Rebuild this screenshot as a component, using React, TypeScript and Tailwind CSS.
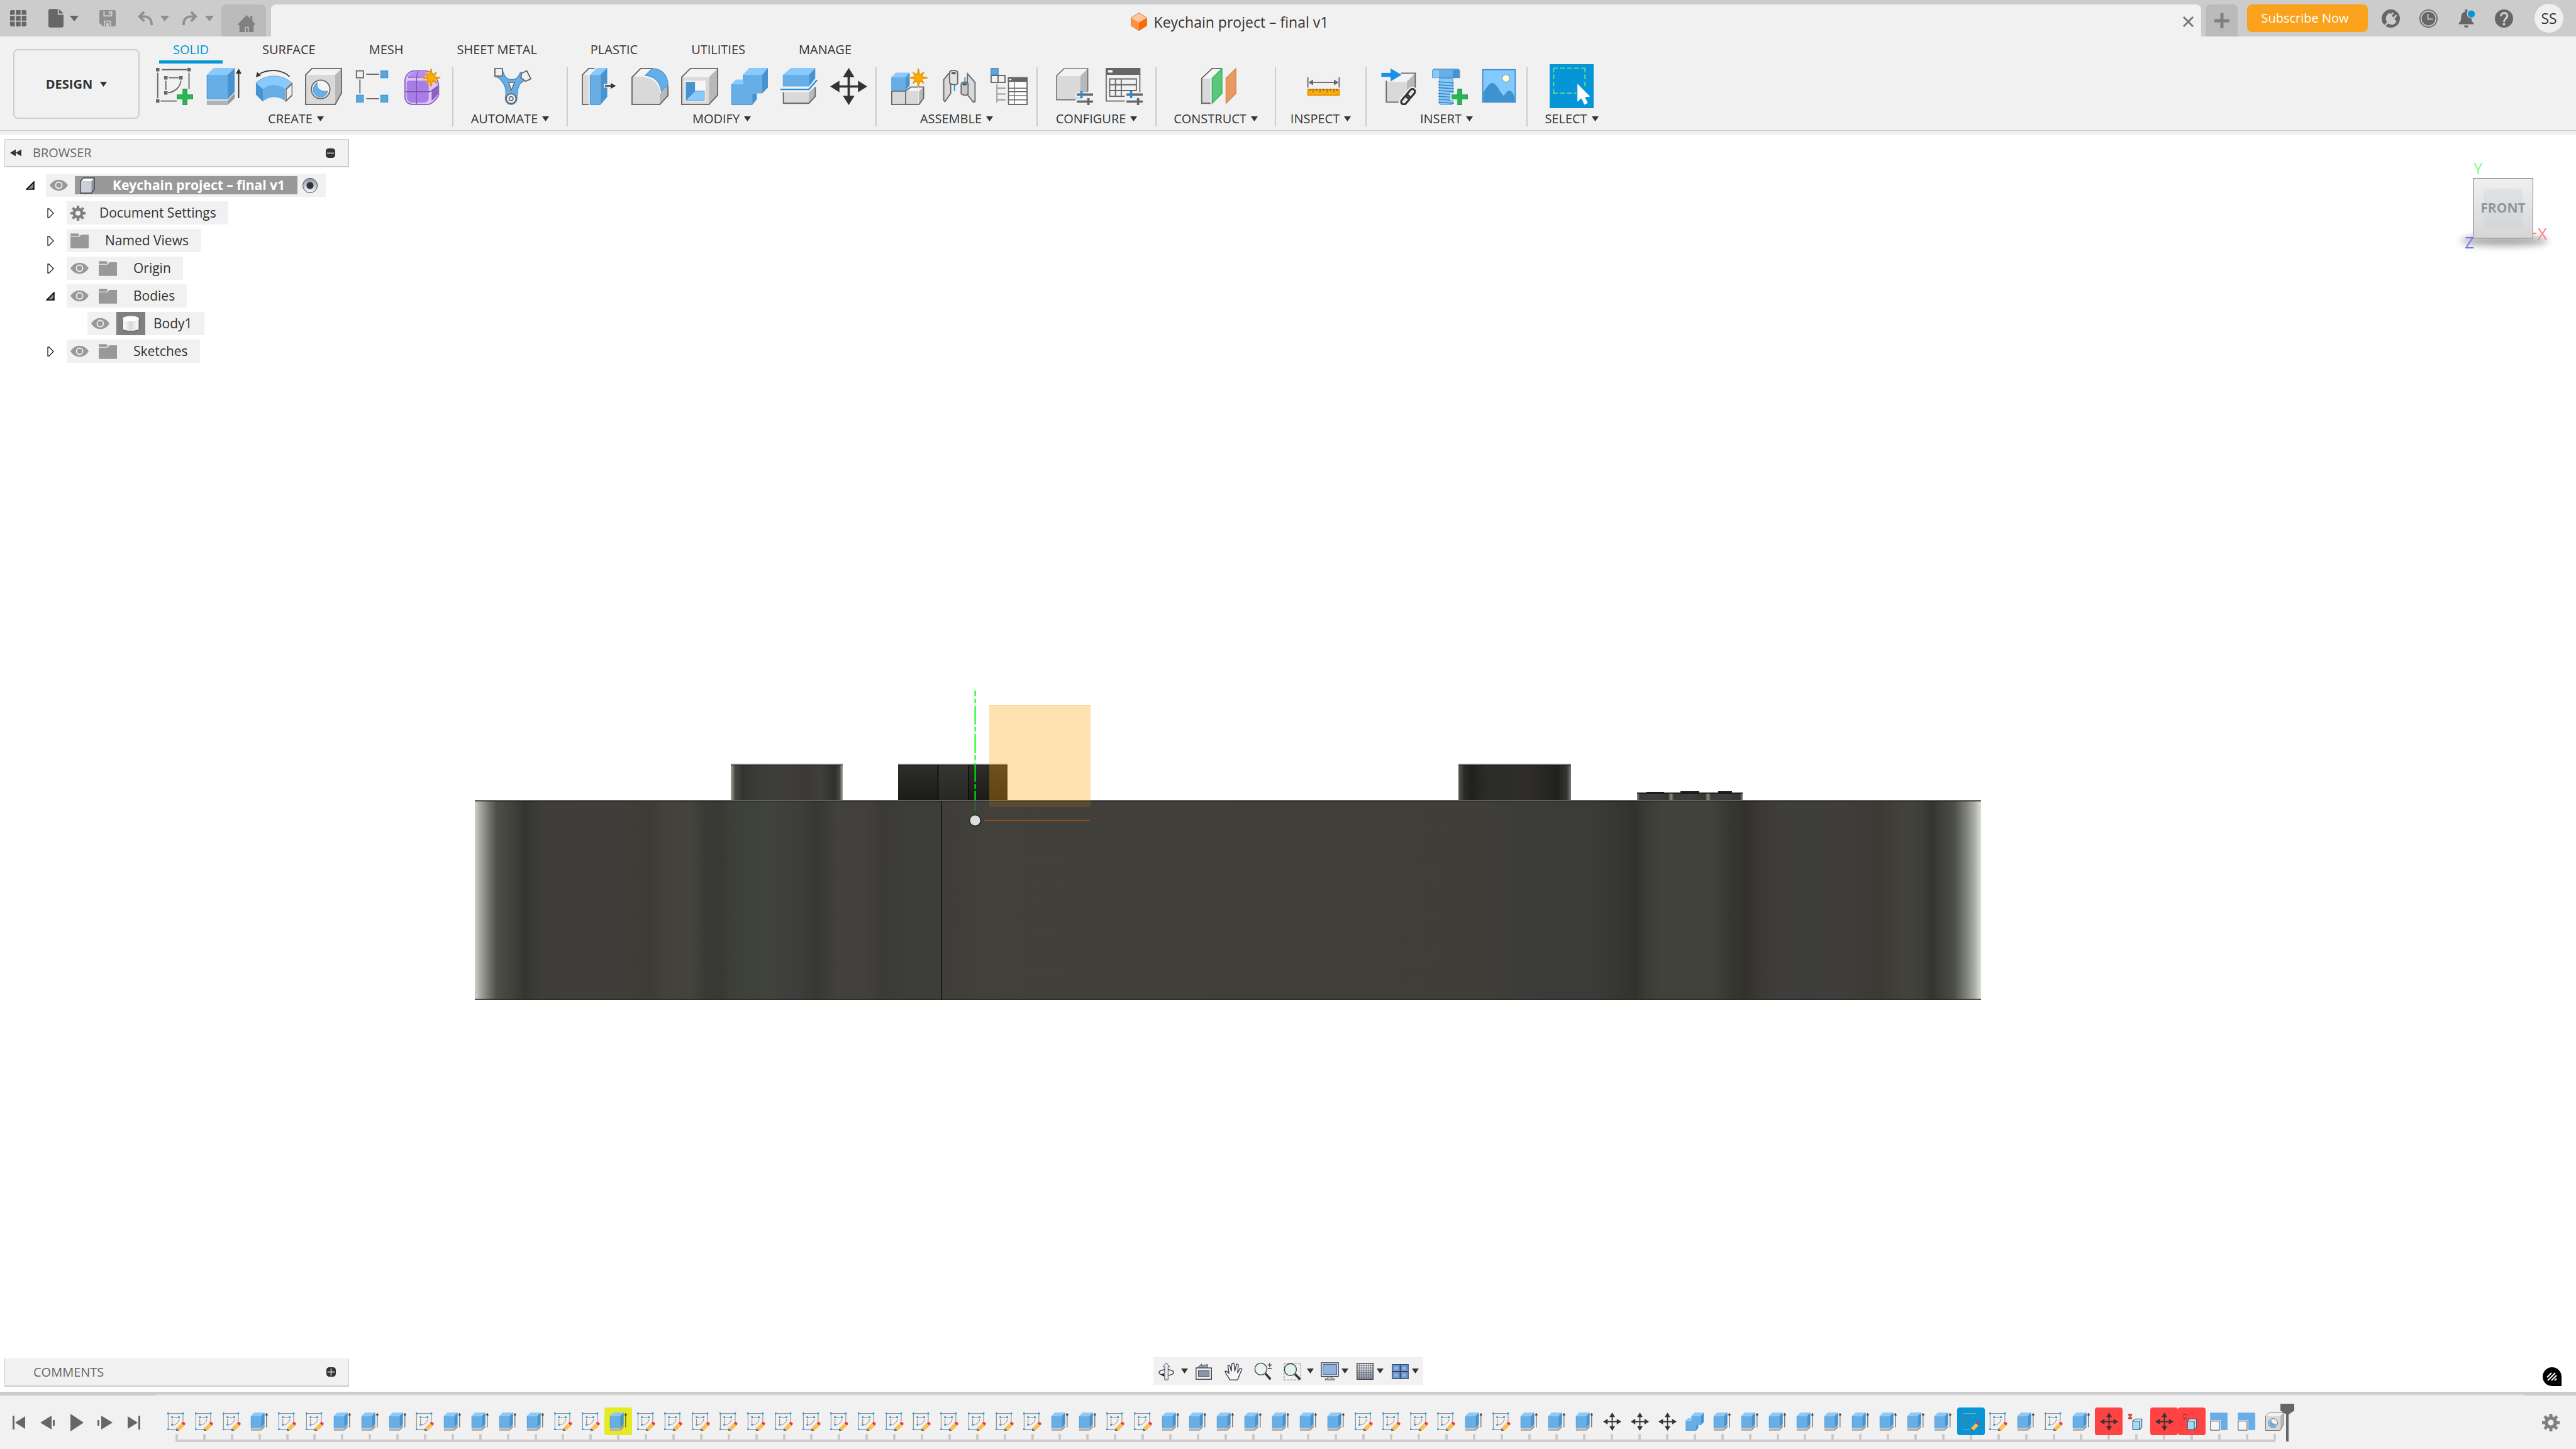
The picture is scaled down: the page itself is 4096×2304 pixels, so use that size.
import type { ReactNode } from "react";

type IconProps = { className?: string };

const BLUE = "#68aee6";
const BLUE_TOP = "#89cafd";
const BLUE_SIDE = "#4693cf";
const EDGE = "#666666";

function starPoints(cx: number, cy: number, outer: number, inner: number, spikes = 8) {
  return Array.from({ length: spikes * 2 }, (_, i) => {
    const r = i % 2 === 0 ? (i % 4 === 0 ? outer : outer * 0.8) : inner;
    const a = (Math.PI * i) / spikes - Math.PI / 2;
    return `${(cx + r * Math.cos(a)).toFixed(2)},${(cy + r * Math.sin(a)).toFixed(2)}`;
  }).join(" ");
}

function Icon({ className = "h-[59px] w-[59px]", box = "0 0 64 64", children }: IconProps & { box?: string; children: ReactNode }) {
  return (
    <svg viewBox={box} className={`shrink-0 ${className}`} fill="none" aria-hidden="true">
      {children}
    </svg>
  );
}

function Caret({ className = "h-2 w-[11px] text-[#333]" }: IconProps) {
  return (
    <svg viewBox="0 0 10 8" preserveAspectRatio="none" className={`shrink-0 ${className}`} aria-hidden="true">
      <path d="M0 0h10L5 8z" fill="currentColor" />
    </svg>
  );
}

function Star({ cx = 46, cy = 17 }: { cx?: number; cy?: number }) {
  return (
    <>
      <polygon points={starPoints(cx, cy, 18, 8)} fill="#f1f1f1" />
      <polygon points={starPoints(cx, cy, 16, 6)} fill="#ffab00" stroke="#e09300" strokeWidth="1.5" />
    </>
  );
}

/* ---------- create ---------- */

function SketchIcon() {
  return (
    <Icon>
      <g stroke={EDGE} strokeWidth="2">
        <path d="M10 3h43M3 8v44M57 8v28M8 57h28M22 17h17M17 22v16M43 22c-1 10-9 19-22 21" />
      </g>
      <path d="M0 0h6v6H0zM54 0h6v6h-6zM0 54h6v6H0zM14 14h6v6h-6zM40 14h6v6h-6zM14 40h6v6h-6z" fill={EDGE} />
      <path d="M46.5 36.5h7v10h10v7h-10v10h-7v-10h-10v-7h10z" fill="#2bb656" stroke="#1e9e47" strokeWidth="1.2" />
    </Icon>
  );
}

function ExtrudeShape() {
  return (
    <>
      <path d="M2 56h36v8H2z" fill="#b3b3b3" />
      <path d="M38 56l12-13v9L38 64z" fill="#999" />
      <path d="M2 12h36v42H2z" fill={BLUE} />
      <path d="M2 12L14 0h36L38 12z" fill={BLUE_TOP} />
      <path d="M38 12L50 0v41L38 54z" fill={BLUE_SIDE} />
      <path d="M2.5 12v41.5H38L49.5 41" stroke="#3e8ecb" strokeWidth="1" />
      <path d="M57 52V8" stroke="#333" strokeWidth="2" />
      <path d="M57 1l5 9H52z" fill="#333" />
    </>
  );
}

function ExtrudeIcon() {
  return (
    <Icon>
      <ExtrudeShape />
    </Icon>
  );
}

function RevolveIcon() {
  return (
    <Icon>
      <path d="M1 26C18 10 46 10 63 26L51 37c-11-9-27-9-38 0z" fill={BLUE_TOP} stroke="#5ba0d6" />
      <path d="M13 37c11-9 27-9 38 0v20c-11-9-27-9-38 1z" fill={BLUE} />
      <path d="M1 26l12 11v21L1 46z" fill={BLUE_SIDE} />
      <path d="M53 37l10.5-10v20L53 57z" fill="#f1f1f1" stroke={EDGE} strokeWidth="2" />
      <path d="M59 15C46 2 20 1 5 12" stroke="#333" strokeWidth="2" />
      <path d="M1 16l2-9 7 6z" fill="#333" />
    </Icon>
  );
}

function HoleShape() {
  return (
    <>
      <path d="M1 12L12 1h51L52 12z" fill="#f3f3f3" />
      <path d="M52 12L63 1v42L52 63z" fill="#b8b8b8" />
      <path d="M1 12h51v51H1z" fill="#d9d9d9" />
      <path d="M1 12L12 1h51v42L52 63H1z" stroke={EDGE} strokeWidth="2" />
      <circle cx="27" cy="37" r="16" fill="#f3f3f3" stroke={EDGE} strokeWidth="2" />
      <path d="M21 25c-9 7-9 19 0 24 7 4 16 0 18-9-11 2-20-4-18-15z" fill={BLUE} stroke="#4b96d2" />
    </>
  );
}

function HoleIcon() {
  return (
    <Icon>
      <HoleShape />
    </Icon>
  );
}

function PatternIcon() {
  return (
    <Icon>
      <path d="M20 11h22M20 53h22M9 20v24" stroke={EDGE} strokeWidth="2" />
      <rect x="3" y="5" width="12" height="12" stroke={EDGE} strokeWidth="2" />
      <g fill="#5aa6dd" stroke="#4b96d2" strokeWidth="1.5">
        <rect x="45" y="5" width="12" height="12" />
        <rect x="3" y="47" width="12" height="12" />
        <rect x="45" y="47" width="12" height="12" />
      </g>
    </Icon>
  );
}

function FormIcon() {
  return (
    <Icon>
      <path d="M1 22C1 14 8 5 18 5h18c12 0 23 16 23 26v14c0 6-12 18-18 18H14C7 63 1 58 1 50z" fill="#dcc6f7" stroke="#8b62bd" strokeWidth="2" />
      <path d="M10 10c4-3 8-4 12-4h12l6 10H5c1-2 3-4 5-6z" fill="#b78cf5" />
      <path d="M4 26c0-3 2-4 5-4h26c5 0 7 2 7 7v22c0 6-4 9-9 9H14C8 60 4 56 4 50z" fill="#a97de6" />
      <path d="M47 38l11-8v14c-1 4-8 11-11 12z" fill="#8e60c6" />
      <path d="M21 20v43M2 41h42l14-9M24 5c-2 5-3 10-3 15M6 16h34" stroke="#7d55ae" strokeWidth="1.5" />
      <Star />
    </Icon>
  );
}

/* ---------- automate ---------- */

function AutomateIcon() {
  return (
    <Icon>
      <path
        d="M14 3c3 14 9 17 17 17 8 0 10-4 14-12l14 13c-10 1-14 4-17 11-3 7-3 14-3 22a9.5 9.5 0 1 1-20-2c3-14 0-22-6-29-4-5-7-8-12-8z"
        fill={BLUE}
        stroke="#4388c2"
        strokeWidth="1.5"
      />
      <path d="M25 25h10l-6 14z" fill="#f1f1f1" stroke={EDGE} strokeWidth="1.5" />
      <path d="M1 1h13v13H1z" fill="#f1f1f1" stroke={EDGE} strokeWidth="2" />
      <path d="M56 5l7 14-9 4-8-6 1-8z" fill="#f1f1f1" stroke={EDGE} strokeWidth="2" />
      <circle cx="29" cy="53" r="8.5" fill="#f1f1f1" stroke={EDGE} strokeWidth="2" />
      <circle cx="29" cy="53" r="3.5" stroke={EDGE} strokeWidth="2" />
    </Icon>
  );
}

/* ---------- modify ---------- */

function PressPullIcon() {
  return (
    <Icon>
      <path d="M1 12h11v51H1z" fill="#d9d9d9" />
      <path d="M12 63H1V12L12 1h10" stroke={EDGE} strokeWidth="2" />
      <path d="M14 12h18v52H14z" fill={BLUE} />
      <path d="M14 12L26 0h18L32 12z" fill={BLUE_TOP} />
      <path d="M32 12L44 0v50L32 64z" fill={BLUE_SIDE} />
      <path d="M14.5 12v51.5H32" stroke="#4b96d2" />
      <path d="M38 28h11v-5l11 8-11 8v-5H38z" fill="#f1f1f1" />
      <path d="M40 31h12" stroke="#333" strokeWidth="2.5" />
      <path d="M50 26l9 5-9 5z" fill="#333" />
    </Icon>
  );
}

function FilletIcon() {
  return (
    <Icon>
      <path d="M1 15L16 1h20L22 15z" fill="#f3f3f3" />
      <path d="M1 15h21c16 0 27 12 27 28v20H1z" fill="#d9d9d9" />
      <path d="M49 45l14-15v18L49 63z" fill="#b8b8b8" />
      <path d="M36 1H16L1 16v47h48l14-15V31" stroke={EDGE} strokeWidth="2" />
      <path d="M24 13L36 1c16 0 27 12 27 28L51 41C50 24 40 14 24 13z" fill={BLUE} stroke="#4b96d2" strokeWidth="1.5" />
      <path d="M22 15.5c16 0 27.5 12 28 27" stroke="#f4f4f4" strokeWidth="2" />
    </Icon>
  );
}

function ShellIcon() {
  return (
    <Icon>
      <path d="M1 16L16 1h47L48 16z" fill="#f3f3f3" />
      <path d="M48 16L63 1v46L48 63z" fill="#b8b8b8" />
      <path d="M1 16h47v47H1z" fill="#d9d9d9" />
      <path d="M1 16L16 1h47v46L48 63H1z" stroke={EDGE} strokeWidth="2" />
      <path d="M6 22h36v36H6z" fill="#f6f6f6" />
      <path d="M8 24h16v16L8 56z" fill={BLUE_SIDE} />
      <path d="M24 40h16v16H8z" fill={BLUE_TOP} stroke="#4b96d2" />
    </Icon>
  );
}

function CombineShape() {
  return (
    <>
      <path d="M1 28h20V12h33v32H37v20H1z" fill={BLUE} />
      <path d="M21 12L32 0h32L54 12zM1 28l8-8h12v8z" fill={BLUE_TOP} />
      <path d="M54 12L64 0v34L54 44zM37 44h8v10l-8 10z" fill={BLUE_SIDE} />
      <path d="M1.5 28v35.5H37M21.5 12v8" stroke="#4b96d2" />
    </>
  );
}

function CombineIcon() {
  return (
    <Icon>
      <CombineShape />
    </Icon>
  );
}

function SplitIcon() {
  return (
    <Icon>
      <path d="M4 12h45v20H4z" fill={BLUE} />
      <path d="M4 12L18 0h42L49 12z" fill={BLUE_TOP} />
      <path d="M49 12L60 0v18L49 32z" fill={BLUE_SIDE} />
      <path d="M0 37h49l14-16" stroke="#1a8fe6" strokeWidth="2.5" />
      <path d="M5 42h44v19H5z" fill="#d9d9d9" />
      <path d="M49 42l11-10v17L49 61z" fill="#b8b8b8" />
      <path d="M5 42v19h44l11-12V33" stroke={EDGE} strokeWidth="2" />
    </Icon>
  );
}

function MoveShape() {
  return (
    <>
      <path d="M32 12v40M12 32h40" stroke="#333" strokeWidth="4" />
      <path d="M32 0l10 16H22zM32 64l10-16H22zM0 32l16-10v20zM64 32L48 22v20z" fill="#333" />
    </>
  );
}

function MoveIcon() {
  return (
    <Icon>
      <MoveShape />
    </Icon>
  );
}

/* ---------- assemble ---------- */

function NewComponentIcon() {
  return (
    <Icon>
      <path d="M1 40h46v23H1z" fill="#d9d9d9" />
      <path d="M25 40l9-7h22l-8 7z" fill="#f3f3f3" />
      <path d="M48 40l8-7v19l-8 11z" fill="#b8b8b8" />
      <path d="M1 40v23h47l8-11V33H34l-9 7v23M1 40h24" stroke={EDGE} strokeWidth="2" />
      <path d="M0 16h25v23H0z" fill={BLUE} />
      <path d="M0 16l8-8h24l-7 8z" fill={BLUE_TOP} />
      <path d="M25 16l7-8v22l-7 9z" fill={BLUE_SIDE} />
      <Star cx={47} />
    </Icon>
  );
}

function JointIcon() {
  return (
    <Icon>
      <path d="M5 20L17 6v38L7 58l-2-2z" fill="#d9d9d9" stroke={EDGE} strokeWidth="2" />
      <path d="M15 8c1-5 13-5 14 0v18c0 4-10 4-14 0z" fill="#e3e3e3" stroke={EDGE} strokeWidth="2" />
      <ellipse cx="22" cy="9" rx="4" ry="2" fill="#555" />
      <path d="M23.5 29v11" stroke="#1a8fe6" strokeWidth="2" />
      <path d="M46 10l13 15v33l-3 1-11-14z" fill="#d9d9d9" stroke={EDGE} strokeWidth="2" />
      <path d="M35 28c1-5 11-5 12 0v16c0 4-10 4-12 0z" fill="#c6c6c6" stroke={EDGE} strokeWidth="2" />
      <ellipse cx="41" cy="28" rx="4" ry="2" fill="#555" />
      <path d="M41.5 16v11" stroke="#1a8fe6" strokeWidth="2" />
    </Icon>
  );
}

function BomIcon() {
  return (
    <Icon>
      <rect x="1" y="1" width="12" height="11" fill="#5aa6dd" stroke="#4b96d2" strokeWidth="2" />
      <path d="M1 13h24v12H1zM13 13v12" stroke={EDGE} strokeWidth="2" />
      <path d="M11 28v32M11 35h15M11 45h15M11 55h15" stroke="#999" strokeWidth="2" />
      <rect x="31" y="17" width="32" height="46" fill="#fff" stroke={EDGE} strokeWidth="2" />
      <path d="M30 16h34v8H30z" fill={EDGE} />
      <path d="M32 19h4v2h-4z" fill="#fff" />
      <path d="M41 24v39M31 35h32M31 41h32M31 48h32M31 55h32" stroke={EDGE} strokeWidth="1.5" />
    </Icon>
  );
}

/* ---------- configure ---------- */

function Sliders() {
  return (
    <>
      <path d="M36 46h28M36 58h28" stroke={EDGE} strokeWidth="4" />
      <path d="M44 40v12" stroke="#1a8fe6" strokeWidth="4" />
      <path d="M56 52v12" stroke={EDGE} strokeWidth="4" />
    </>
  );
}

function ConfigureIcon() {
  return (
    <Icon>
      <path d="M1 14L14 1h41L42 14z" fill="#f3f3f3" />
      <path d="M42 14L55 1v40L42 55z" fill="#b8b8b8" />
      <path d="M1 14h41v41H1z" fill="#d9d9d9" />
      <path d="M55 41V1H14L1 14v41h34" stroke={EDGE} strokeWidth="1.5" />
      <path d="M34 42h30v8H34zM34 54h30v8H34z" fill="#f1f1f1" />
      <Sliders />
    </Icon>
  );
}

function ConfigTableIcon() {
  return (
    <Icon>
      <path d="M0 0h60v12H0z" fill={EDGE} />
      <path d="M4 4h8v4H4z" fill="#fff" />
      <path d="M1 10v47h32M59 10v32" stroke={EDGE} strokeWidth="2" />
      <path d="M53 40V19H7v30h26M7 29h46M7 39h46M17 19v30M27 19v30" stroke={EDGE} strokeWidth="2" />
      <path d="M34 42h30v22H34z" fill="#f1f1f1" />
      <Sliders />
    </Icon>
  );
}

/* ---------- construct, inspect ---------- */

function ConstructIcon() {
  return (
    <Icon>
      <path d="M3 18h15v43H3z" fill="#d9d9d9" />
      <path d="M3 18L21 1h16L20 18z" fill="#f5f5f5" />
      <path d="M18 61H3V18L21 1h17" stroke={EDGE} strokeWidth="2" />
      <path d="M21 18L38 1v43L21 61z" fill="#5bc77c" stroke="#35b35c" strokeWidth="1.5" />
      <path d="M45 18L62 1v43L45 61z" fill="#e89a64" stroke="#d98246" strokeWidth="1.5" />
    </Icon>
  );
}

function InspectIcon() {
  return (
    <Icon>
      <path d="M5 16v18M59 16v18M10 25h44" stroke={EDGE} strokeWidth="2" />
      <path d="M6 25l8-5v10zM58 25l-8-5v10z" fill={EDGE} />
      <rect x="5" y="37" width="54" height="10" fill="#ffab00" stroke="#e09300" strokeWidth="2" />
      <path d="M9 36v4M14 36v6M20 36v4M26 36v6M32 36v4M38 36v6M44 36v4M50 36v6M55 36v4" stroke={EDGE} strokeWidth="1.5" />
    </Icon>
  );
}

/* ---------- insert, select ---------- */

function InsertLinkIcon() {
  return (
    <Icon>
      <path d="M9 24L24 9h35L44 24z" fill="#f3f3f3" />
      <path d="M44 24L59 9v38L44 60z" fill="#b8b8b8" />
      <path d="M9 24h35v36H9z" fill="#d9d9d9" />
      <path d="M34 9h25v28M9 22v37h21" stroke={EDGE} strokeWidth="2" />
      <path d="M0 8h16V0l20 12-20 12v-8H0z" fill="#1a8fe6" stroke="#f1f1f1" />
      <g transform="rotate(-50 47 50)">
        <g stroke="#f1f1f1" strokeWidth="8">
          <rect x="31" y="45" width="18" height="9" rx="4.5" />
          <rect x="45" y="45" width="18" height="9" rx="4.5" />
        </g>
        <g stroke="#333" strokeWidth="3.5">
          <rect x="31" y="45" width="18" height="9" rx="4.5" />
          <rect x="45" y="45" width="18" height="9" rx="4.5" />
        </g>
      </g>
    </Icon>
  );
}

function BoltIcon() {
  return (
    <Icon>
      <path d="M15 18h23v44l-3 2H18l-3-2z" fill="#89cafd" stroke="#4b96d2" />
      <path d="M3 4l2-2h42l3 2v13H3z" fill={BLUE} stroke="#4285bd" />
      <path d="M4 4h10v13H4z" fill={BLUE_TOP} />
      <path d="M38 3h11v14H38z" fill={BLUE_SIDE} />
      <path
        d="M13 24l27 2M13 29l27 2M13 34l27 2M13 39l27 2M13 44l27 2M13 49l27 2M13 54l27 2M13 59l27 2"
        stroke="#3f86bf"
        strokeWidth="1.8"
      />
      <path d="M44 34h12v10h8v12h-8v8H44v-8H34V44h10z" fill="#f1f1f1" />
      <path d="M46.5 36.5h7v10h10v7h-10v10h-7v-10h-10v-7h10z" fill="#2bb656" stroke="#1e9e47" strokeWidth="1.2" />
    </Icon>
  );
}

function ImageIcon() {
  return (
    <Icon>
      <rect x="4" y="3" width="56" height="56" fill="#84c9fd" stroke="#3e92cf" strokeWidth="2" />
      <circle cx="44" cy="18" r="6.5" fill="#ffffcf" stroke="#7aa9c0" strokeWidth="1.5" />
      <path d="M5 42c5-7 10-16 15-16 9 0 13 16 20 22 4-3 5-9 9-9 5 0 7 4 10 12v8H5z" fill="#3e92cf" />
    </Icon>
  );
}

function SelectIcon() {
  return (
    <Icon className="h-[70px] w-[70px]" box="0 0 76 76">
      <path d="M7 14V7h7M54 7h7v7M7 43v7h7" stroke="#6cdb84" strokeWidth="2" />
      <path d="M18 7h32M18 50h28M7 18v22M61 18v22" stroke="#6cdb84" strokeWidth="2" strokeDasharray="8 4" />
      <path d="M48 34l22 22-9 1 5 10-6 3-5-11-7 6z" fill="#fff" />
    </Icon>
  );
}

const tabs = ["SOLID", "SURFACE", "MESH", "SHEET METAL", "PLASTIC", "UTILITIES", "MANAGE"];

const groups = [
  { label: "CREATE", width: "w-[499px]", icons: [SketchIcon, ExtrudeIcon, RevolveIcon, HoleIcon, PatternIcon, FormIcon] },
  { label: "AUTOMATE", width: "w-[182px]", icons: [AutomateIcon] },
  { label: "MODIFY", width: "w-[491px]", icons: [PressPullIcon, FilletIcon, ShellIcon, CombineIcon, SplitIcon, MoveIcon] },
  { label: "ASSEMBLE", width: "w-[256px]", icons: [NewComponentIcon, JointIcon, BomIcon] },
  { label: "CONFIGURE", width: "w-[189px]", icons: [ConfigureIcon, ConfigTableIcon] },
  { label: "CONSTRUCT", width: "w-[190px]", icons: [ConstructIcon] },
  { label: "INSPECT", width: "w-[144px]", icons: [InspectIcon] },
  { label: "INSERT", width: "w-[256px]", icons: [InsertLinkIcon, BoltIcon, ImageIcon] },
];

function TitleBar() {
  return (
    <header className="flex h-[58px] items-end bg-[#ccc] text-[#666]">
      <div className="flex h-full items-center pr-3 pl-4">
        <button aria-label="Data panel" className="mr-[35px]">
          <Icon className="h-[26px] w-[26px]" box="0 0 28 28">
            <path
              d="M2 0h6v8H0V2zM10 0h8v8h-8zM20 0h6l2 2v6h-8zM0 10h8v8H0zM10 10h8v8h-8zM20 10h8v8h-8zM0 20h8v8H2l-2-2zM10 20h8v8h-8zM20 20h8v6l-2 2h-6z"
              fill="currentColor"
            />
          </Icon>
        </button>
        <button aria-label="File" className="mr-[33px] flex items-center gap-[10px]">
          <Icon className="h-[30px] w-6" box="0 0 26 32">
            <path d="M2 0h14v10h10v20l-2 2H2l-2-2V2z" fill="currentColor" />
            <path d="M18 0l8 8h-8z" fill="currentColor" />
          </Icon>
          <Caret className="h-[9px] w-[14px]" />
        </button>
        <button aria-label="Save" className="mr-[35px] text-[#8f8f8f]">
          <Icon className="h-[26px] w-[26px]" box="0 0 28 28">
            <path d="M2 0h24l2 2v24l-2 2H6l-6-6V2z" fill="currentColor" />
            <path d="M8 1v9h13V1M9 27v-8h10v8" stroke="#ccc" strokeWidth="2" />
            <path d="M12 22h4v6h-4zM16 2h3v5h-3z" fill="#ccc" />
          </Icon>
        </button>
        <button aria-label="Undo" className="mr-[21px] flex items-center gap-3 text-[#8f8f8f]">
          <Icon className="h-6 w-6" box="0 0 26 26">
            <path d="M11 2L3 10l8 8M3 10h8c8 0 13 4 13 15" stroke="currentColor" strokeWidth="4" />
          </Icon>
          <Caret className="h-[9px] w-[14px]" />
        </button>
        <button aria-label="Redo" className="flex items-center gap-3 text-[#8f8f8f]">
          <Icon className="h-6 w-6" box="0 0 26 26">
            <path d="M15 2l8 8-8 8M23 10h-8C7 10 2 14 2 25" stroke="currentColor" strokeWidth="4" />
          </Icon>
          <Caret className="h-[9px] w-[14px]" />
        </button>
      </div>
      <button aria-label="Home" className="mr-2 flex h-[51px] w-[71px] items-center justify-center rounded-t-lg bg-[#bababa] pt-2 pl-2 text-[#808080]">
        <Icon className="h-7 w-7" box="0 0 30 30">
          <path d="M15 1l6 6V3h4v8l5 6-3 2v11h-8v-9h-7v9H3V19l-3-2z" fill="currentColor" />
          <path d="M14 23h3v7h-3z" fill="currentColor" />
        </Icon>
      </button>
      <div className="flex h-[51px] flex-1 items-center rounded-t-lg bg-[#f1f1f1] pt-1 pr-3 pl-2 text-[#333]">
        <h1 className="flex flex-1 items-center justify-center gap-[11px] text-[23px] leading-8">
          <Icon className="h-[29px] w-[26px]" box="0 0 28 32">
            <path d="M14 0l14 9-14 8L0 9z" fill="#ffc59c" />
            <path d="M0 9l14 8v15L0 23z" fill="#ff9146" />
            <path d="M28 9l-14 8v15l14-9z" fill="#ff6b00" />
            <path d="M14 .5L27.5 9v14L14 31.5.5 23V9z" stroke="#c9793f" />
          </Icon>
          Keychain project – final v1
        </h1>
        <button aria-label="Close tab">
          <Icon className="h-[17px] w-[17px]" box="0 0 18 18">
            <path d="M1 1l16 16M17 1L1 17" stroke="#777" strokeWidth="3" />
          </Icon>
        </button>
      </div>
      <button aria-label="New tab" className="ml-[7px] flex h-[51px] w-[51px] items-center justify-center rounded-t-lg bg-[#bababa]">
        <Icon className="h-6 w-6" box="0 0 24 24">
          <path d="M12 0v24M0 12h24" stroke="#808080" strokeWidth="5" />
        </Icon>
      </button>
      <div className="flex h-full items-center pr-5 pl-[15px]">
        <button className="mr-[22px] h-11 w-48 rounded-lg bg-[#faa21b] pr-2 text-[20px] font-medium text-white">Subscribe Now</button>
        <div className="mr-[34px] flex items-center gap-[31px]">
          <button aria-label="Extensions">
            <Icon className="h-[29px] w-[29px]" box="0 0 32 32">
              <circle cx="16" cy="16" r="16" fill="currentColor" />
              <path d="M10 9l4-3 12 15-3 4c-4 3-10 2-12-1-4-3-5-11-1-15z" fill="#ccc" />
              <path d="M15 12l5-6M20 17l6-7" stroke="#ccc" strokeWidth="3" />
              <path d="M11 23l-6 6" stroke="#ccc" strokeWidth="3" />
            </Icon>
          </button>
          <button aria-label="Job status">
            <Icon className="h-[29px] w-[29px]" box="0 0 32 32">
              <circle cx="16" cy="16" r="15" stroke="currentColor" strokeWidth="2" />
              <circle cx="16" cy="16" r="12" fill="currentColor" />
              <path d="M15 8v9h9" stroke="#ccc" strokeWidth="2" />
            </Icon>
          </button>
          <button aria-label="Notifications">
            <Icon className="h-[29px] w-[29px]" box="0 0 32 32">
              <path d="M14 0h4v4c5 1 7 5 7 10s1 7 4 10v2H3v-2c3-3 4-5 4-10S9 5 14 4zM12 28h8c0 5-8 5-8 0z" fill="currentColor" />
              <circle cx="25" cy="8" r="7" fill="#0696d7" stroke="#ccc" strokeWidth="1.5" />
            </Icon>
          </button>
          <button aria-label="Help">
            <Icon className="h-[29px] w-[29px]" box="0 0 32 32">
              <circle cx="16" cy="16" r="16" fill="currentColor" />
              <path d="M10.5 12c0-8 11.5-7 11.5-1 0 5-6 5-6 11" stroke="#ccc" strokeWidth="3.5" />
              <path d="M14 24h4v4h-4z" fill="#ccc" />
            </Icon>
          </button>
        </div>
        <button className="h-[46px] w-[46px] rounded-full bg-[#efefef] text-[23px] leading-none text-[#333]">SS</button>
      </div>
    </header>
  );
}

function Ribbon() {
  return (
    <div className="border-b border-[#ccc] bg-[#f1f1f1] pb-[6px]">
      <div className="flex pl-[21px]">
        <button className="mt-5 flex h-[111px] w-[201px] items-center justify-center gap-3 rounded-lg border-2 border-[#ccc] text-[20px] font-bold text-[#333]">
          DESIGN
          <Caret />
        </button>
        <div>
          <nav className="mt-1 flex gap-[41px] pl-[31px]">
            {tabs.map((tab, i) => (
              <button
                key={tab}
                className={`h-[39px] border-b-[5px] px-[22px] text-[20px] ${
                  i === 0 ? "border-[#0696d7] text-[#0696d7]" : "border-transparent text-[#333]"
                }`}
              >
                {tab}
              </button>
            ))}
          </nav>
          <div className="mt-[6px] flex">
            {groups.map(({ label, width, icons }) => (
              <section key={label} className={`flex flex-col items-center border-r-2 border-[#ccc] pt-px ${width}`}>
                <div className="flex gap-5 pl-2">
                  {icons.map((ToolIcon, i) => (
                    <button key={i} aria-label={`${label} tool ${i + 1}`}>
                      <ToolIcon />
                    </button>
                  ))}
                </div>
                <button className="mt-[10px] flex items-center gap-[7px] text-[20px] leading-6 text-[#333]">
                  {label}
                  <Caret />
                </button>
              </section>
            ))}
            <section className="flex w-[140px] flex-col items-center pt-px">
              <button aria-label="Select" className="-my-[6px] bg-[#0696d7]">
                <SelectIcon />
              </button>
              <button className="mt-[11px] flex items-center gap-[7px] text-[20px] leading-6 text-[#333]">
                SELECT
                <Caret />
              </button>
            </section>
          </div>
        </div>
      </div>
    </div>
  );
}

/* ---------- browser tree ---------- */

function EyeIcon() {
  return (
    <Icon className="h-[19px] w-[29px]" box="0 0 32 20">
      <path d="M0 10C8-3 24-3 32 10 24 23 8 23 0 10z" fill="#999" />
      <circle cx="16" cy="10" r="5.5" stroke="#f1f1f1" strokeWidth="2" />
    </Icon>
  );
}

function FolderIcon() {
  return (
    <Icon className="h-6 w-[29px]" box="0 0 32 26">
      <path d="M0 0h13l3 2-2 3H0z" fill="#999" />
      <path d="M0 6h15l4-4h13v24H0z" fill="#999" />
    </Icon>
  );
}

function GearIcon({ className = "h-6 w-6" }: IconProps) {
  return (
    <Icon className={className} box="-14 -14 28 28">
      <g fill="#808080">
        {[0, 45, 90, 135].map((angle) => (
          <rect key={angle} x="-2.5" y="-14" width="5" height="28" transform={`rotate(${angle})`} />
        ))}
        <circle r="10" />
      </g>
      <circle r="4.5" fill="#f1f1f1" />
    </Icon>
  );
}

function Twisty({ open }: { open: boolean }) {
  return open ? (
    <Icon className="h-[14px] w-[14px]" box="0 0 14 14">
      <defs>
        <linearGradient id="twisty" x1="0" y1="0" x2="1" y2="1">
          <stop offset="0.4" stopColor="#222" />
          <stop offset="0.7" stopColor="#999" />
          <stop offset="1" stopColor="#111" />
        </linearGradient>
      </defs>
      <path d="M13 1v12H1z" fill="url(#twisty)" stroke="#000" strokeWidth="1.5" />
    </Icon>
  ) : (
    <Icon className="h-4 w-[14px]" box="0 0 14 16">
      <path d="M3 1h2l7 7-7 7H3z" fill="#fff" stroke="#222" strokeWidth="1.3" />
    </Icon>
  );
}

type Row = { label: string; indent: string; open?: boolean; eye?: boolean; icon: "gear" | "folder" | "body" };

const rows: Row[] = [
  { label: "Document Settings", indent: "pl-[73px]", open: false, icon: "gear" },
  { label: "Named Views", indent: "pl-[73px]", open: false, icon: "folder" },
  { label: "Origin", indent: "pl-[73px]", open: false, eye: true, icon: "folder" },
  { label: "Bodies", indent: "pl-[73px]", open: true, eye: true, icon: "folder" },
  { label: "Body1", indent: "pl-[139px]", eye: true, icon: "body" },
  { label: "Sketches", indent: "pl-[73px]", open: false, eye: true, icon: "folder" },
];

const labelGap = { gear: "ml-[22px]", folder: "ml-[26px]", body: "ml-[18px]" };

function BodyIcon() {
  return (
    <span className="-mx-[5px] flex h-[37px] w-[46px] items-center justify-center bg-[#808080]">
      <Icon className="h-[26px] w-7" box="0 0 30 28">
        <defs>
          <linearGradient id="cyl">
            <stop offset="0" stopColor="#fff" />
            <stop offset="0.5" stopColor="#d6d8dd" />
            <stop offset="1" stopColor="#fff" />
          </linearGradient>
        </defs>
        <path d="M1 5v17c0 6 28 6 28 0V5z" fill="url(#cyl)" stroke="#444" />
        <ellipse cx="15" cy="5" rx="14" ry="4.5" fill="#fff" />
      </Icon>
    </span>
  );
}

function TreeRow({ row }: { row: Row }) {
  return (
    <li className={`flex items-center ${row.indent}`}>
      {row.open !== undefined && (
        <button aria-label={`Toggle ${row.label}`} className="mr-[19px]">
          <Twisty open={row.open} />
        </button>
      )}
      <div className="flex h-[37px] items-center bg-[#f1f1f1] pr-[19px] pl-[6px]">
        {row.eye && (
          <button aria-label={`Show ${row.label}`} className="mr-4">
            <EyeIcon />
          </button>
        )}
        {row.icon === "gear" && <GearIcon />}
        {row.icon === "folder" && <FolderIcon />}
        {row.icon === "body" && <BodyIcon />}
        <span className={`text-[21px] text-[#333] ${labelGap[row.icon]}`}>{row.label}</span>
      </div>
    </li>
  );
}

function PanelDot({ plus = false }: { plus?: boolean }) {
  return (
    <Icon className="h-[15px] w-[15px]" box="0 0 16 16">
      <rect width="16" height="16" rx="5" fill="#333" />
      <path d={plus ? "M2 8h12M8 2v12" : "M2 8h12"} stroke="#bbb" strokeWidth="2" />
    </Icon>
  );
}

function Browser() {
  return (
    <aside className="w-[555px] pt-[7px]">
      <div className="ml-[7px] flex h-[45px] items-center border border-r-2 border-b-2 border-[#ccc] bg-[#f1f1f1] pr-5 pl-2">
        <button aria-label="Collapse">
          <Icon className="h-3 w-[18px]" box="0 0 20 12">
            <path d="M10 0v12L0 6zM20 0v12L10 6z" fill="#333" />
          </Icon>
        </button>
        <h2 className="ml-[18px] flex-1 text-[20px] text-[#666]">BROWSER</h2>
        <button aria-label="Minimize browser">
          <PanelDot />
        </button>
      </div>
      <ul className="mt-[10px] flex flex-col gap-[7px]">
        <li className="flex items-center pl-[41px]">
          <button aria-label="Toggle root" className="mr-[18px]">
            <Twisty open />
          </button>
          <div className="flex h-[37px] items-center bg-[#f1f1f1] pr-[13px] pl-[6px]">
            <button aria-label="Show all" className="mr-[11px]">
              <EyeIcon />
            </button>
            <span className="mr-2 flex h-[29px] items-center bg-[#999] pr-5 pl-2 text-[21px] font-bold text-white">
              <Icon className="mr-[28px] h-[26px] w-6" box="0 0 26 28">
                <path d="M1 7l5-6h19l-5 6z" fill="#fff" />
                <path d="M20 7l5-6v20l-5 6z" fill="#8e96a5" />
                <path d="M1 7h19v20H1z" fill="#ccd0da" />
                <path d="M1 7l5-6h19v20l-5 6H1z" stroke="#444" strokeWidth="1.5" />
              </Icon>
              Keychain project – final v1
            </span>
            <input
              type="radio"
              defaultChecked
              aria-label="Activate component"
              className="h-6 w-6 appearance-none rounded-full border border-[#444] bg-[radial-gradient(circle,#333_0_5px,transparent_6px),linear-gradient(#8f98ad,#f4f6fa)]"
            />
          </div>
        </li>
        {rows.map((row) => (
          <TreeRow key={row.label} row={row} />
        ))}
      </ul>
    </aside>
  );
}

function ViewCube() {
  return (
    <div className="relative mt-[69px] mr-[68px] h-24 w-24">
      <div className="absolute -bottom-3 -left-5 h-4 w-[140px] rounded-[50%] bg-black/35 blur-[6px]" />
      <button className="relative flex h-24 w-24 items-center justify-center border border-[#808080] bg-linear-to-b from-[#f0f0f0] to-[#d6d6d6] text-[21px] font-bold text-[#92969c]">
        <span className="flex h-[62px] w-[62px] items-center justify-center bg-[#c8d0dc]/30">FRONT</span>
      </button>
      <span className="absolute -top-8 left-px text-[26px] leading-8 font-medium text-[#80ff80]">Y</span>
      <span className="absolute -right-[22px] -bottom-2 text-[26px] leading-8 font-medium text-[#ff8080]">X</span>
      <span className="absolute -bottom-[22px] -left-[13px] text-[26px] leading-8 font-medium text-[#7070ff]">Z</span>
      <span className="absolute -right-[5px] bottom-[7px] h-[2px] w-[5px] bg-[#ff8080]" />
    </div>
  );
}

/* ---------- model ---------- */

const bodyStops: [number, string][] = [
  [0, "#cfd2c8"], [10, "#a0a398"], [21, "#767970"], [35, "#4c4e47"], [56, "#42443d"], [80, "#343530"], [108, "#3e3d3a"],
  [189, "#403e3b"], [234, "#403e39"], [280, "#3c3b35"], [301, "#42413c"], [343, "#45433e"], [364, "#3b3b36"], [392, "#373833"],
  [406, "#3d3f39"], [462, "#41433d"], [511, "#3e3e3c"], [546, "#373733"], [563, "#3c3c38"], [577, "#42413d"], [623, "#41403c"],
  [651, "#3b3a37"], [686, "#3d3d39"], [742, "#3e3d39"], [798, "#41403b"], [1600, "#3f3e39"], [1705, "#3b3b39"], [1775, "#3b3b38"],
  [1816, "#363632"], [1845, "#33312d"], [1865, "#3a3c36"], [1886, "#40423b"], [1967, "#40423b"], [1996, "#373732"], [2020, "#33312c"],
  [2043, "#3a3935"], [2078, "#3f3e3b"], [2125, "#3d3d3b"], [2171, "#403e3b"], [2235, "#3b3a35"], [2276, "#43423d"], [2300, "#3f3f3a"],
  [2317, "#343530"], [2352, "#4c4e48"], [2370, "#7a7d75"], [2384, "#a9aca3"], [2395, "#dcdfd5"],
];

function Model() {
  return (
    <svg viewBox="0 214 4096 1999" className="absolute inset-0 h-full w-full" fill="none" aria-label="Model viewport">
      <defs>
        <linearGradient id="body">
          {bodyStops.map(([x, color]) => (
            <stop key={x} offset={x / 2395} stopColor={color} />
          ))}
        </linearGradient>
        <linearGradient id="bump">
          <stop offset="0" stopColor="#a3a69c" />
          <stop offset="0.04" stopColor="#45473f" />
          <stop offset="0.11" stopColor="#33342f" />
          <stop offset="0.22" stopColor="#3b3c37" />
          <stop offset="0.5" stopColor="#403e3b" />
          <stop offset="0.68" stopColor="#3b3a36" />
          <stop offset="0.8" stopColor="#403f3c" />
          <stop offset="0.93" stopColor="#2f2f2c" />
          <stop offset="0.97" stopColor="#45453f" />
          <stop offset="1" stopColor="#a3a69c" />
        </linearGradient>
        <linearGradient id="bumpDark">
          <stop offset="0" stopColor="#5a5b58" />
          <stop offset="0.05" stopColor="#2a2b28" />
          <stop offset="0.12" stopColor="#20201d" />
          <stop offset="0.25" stopColor="#2b2b28" />
          <stop offset="0.6" stopColor="#2e2d2b" />
          <stop offset="0.88" stopColor="#21211f" />
          <stop offset="0.96" stopColor="#333331" />
          <stop offset="1" stopColor="#777874" />
        </linearGradient>
        <linearGradient id="side" x2="0" y2="1">
          <stop offset="0" stopColor="#2d2d2b" />
          <stop offset="1" stopColor="#1b1b19" />
        </linearGradient>
        <linearGradient id="sideMid" x2="0" y2="1">
          <stop offset="0" stopColor="#353533" />
          <stop offset="1" stopColor="#272725" />
        </linearGradient>
        <linearGradient id="key">
          <stop offset="0" stopColor="#8b8e86" />
          <stop offset="0.08" stopColor="#3a3b36" />
          <stop offset="0.5" stopColor="#403e3b" />
          <stop offset="0.92" stopColor="#353631" />
          <stop offset="1" stopColor="#8b8e86" />
        </linearGradient>
      </defs>

      <rect x="1162" y="1216" width="178" height="57" fill="url(#bump)" />
      <rect x="1428" y="1216" width="63" height="57" fill="url(#side)" />
      <rect x="1491" y="1216" width="49" height="57" fill="url(#sideMid)" />
      <rect x="1540" y="1216" width="62" height="57" fill="url(#side)" />
      <path d="M1491.5 1216v57M1540 1216v57" stroke="#0a0a0a" strokeWidth="1.5" />
      <rect x="2319" y="1216" width="179" height="57" fill="url(#bumpDark)" />
      <rect x="2603" y="1261" width="54" height="12" fill="url(#key)" />
      <rect x="2657" y="1261" width="59" height="12" fill="url(#key)" />
      <rect x="2716" y="1261" width="55" height="12" fill="url(#key)" />
      <path d="M2618 1259h28v3h-28zM2672 1258h30v4h-30zM2732 1258h22v4h-22z" fill="#262626" />
      <path d="M1162 1216h178M1428 1216h174M2319 1216h179M2603 1261h168" stroke="#111" strokeWidth="1.5" />
      <path d="M1162 1215h178M1428 1215h174M2319 1215h179" stroke="#b5b5b5" />

      <rect x="755" y="1273" width="2395" height="317" fill="url(#body)" />
      <path d="M755 1272.5h2395" stroke="#b5b5b5" />
      <path d="M755 1273.5h2395" stroke="#111" strokeWidth="1.5" />
      <path d="M755 1589h2395" stroke="#2b2929" strokeWidth="1.5" />
      <path d="M1497 1273v316" stroke="#111" strokeWidth="1.5" />

      <rect x="1573" y="1121" width="161" height="152" fill="#ffa200" fillOpacity="0.31" />
      <rect x="1573" y="1273" width="161" height="10" fill="#ffa200" fillOpacity="0.13" />
      <path d="M1573 1121.5h161" stroke="#ffa200" strokeOpacity="0.2" />
      <path d="M1550.5 1098v174" stroke="#00ff00" strokeWidth="2" strokeDasharray="9 4 7 4 30 4 7 4 30 4 8 4 30 4 7 4 30" />
      <path d="M1550.5 1273v17" stroke="#2e7a26" strokeWidth="1.5" />
      <path d="M1565 1304.5h168" stroke="#96501f" strokeWidth="1.5" />
      <path d="M1738 1304.5h19" stroke="#6b2a22" strokeWidth="1.5" strokeDasharray="8 3" />
      <circle cx="1550.5" cy="1304.5" r="9" fill="#dddddb" stroke="#2a2a28" strokeWidth="2" />
    </svg>
  );
}

/* ---------- navigation bar ---------- */

function NavIcon({ name }: { name: string }) {
  const line = "#3a3f4a";
  switch (name) {
    case "Orbit":
      return (
        <>
          <ellipse cx="15" cy="18" rx="13" ry="5" stroke={line} strokeWidth="1.5" />
          <path d="M12 31V8H9l6-7 6 7h-3v23z" fill="#e3e7ef" stroke={line} />
          <path d="M5 22l6-3v6z" fill="#222" />
        </>
      );
    case "Look at":
      return (
        <>
          <path d="M4 10l8-7v3l10-2v6" fill="#9aa0ab" stroke={line} />
          <rect x="2" y="10" width="27" height="20" fill="#f0f2f6" stroke={line} strokeWidth="1.5" />
          <rect x="6" y="15" width="19" height="10" fill="#8d94a3" stroke={line} />
        </>
      );
    case "Pan":
      return (
        <path
          d="M9 31c-1-6-7-9-8-15 3-1 5 1 7 4L6 6c2-2 4 0 4 2l2 8 1-13c2-3 4-1 4 1l1 12 3-12c2-2 4 0 3 3l-1 12 4-8c3-1 4 1 3 3l-4 9c-1 4-2 5-3 8z"
          fill="#f5f6f8"
          stroke={line}
          strokeWidth="1.5"
        />
      );
    case "Zoom":
      return (
        <>
          <path d="M20 20l9 10" stroke="#333" strokeWidth="4" />
          <circle cx="12" cy="12" r="10.5" fill="#e9f3f0" stroke={line} strokeWidth="1.5" />
          <path d="M24 5h7M27.5 1v8M24 11h7" stroke={line} strokeWidth="1.5" />
        </>
      );
    case "Fit":
      return (
        <>
          <path d="M1 2h29v29H1z" stroke="#777" strokeDasharray="4 2" />
          <path d="M20 21l9 9" stroke="#333" strokeWidth="4" />
          <circle cx="12" cy="13" r="10.5" fill="#e3f1ec" stroke={line} strokeWidth="1.5" />
        </>
      );
    case "Display":
      return (
        <>
          <rect x="1" y="1" width="30" height="24" fill="#f0f2f6" stroke={line} strokeWidth="1.5" />
          <rect x="4" y="4" width="24" height="18" fill="#8fb2dd" stroke="#2c4a80" />
          <path d="M13 25h6l1 4h4v2H8v-2h4z" fill="#c8ccd4" stroke={line} />
        </>
      );
    case "Grid":
      return (
        <>
          <defs>
            <linearGradient id="grid" x2="0" y2="1">
              <stop offset="0" stopColor="#fff" />
              <stop offset="1" stopColor="#8d95a5" />
            </linearGradient>
          </defs>
          <rect x="2" y="2" width="28" height="28" fill="url(#grid)" stroke="#333" strokeWidth="1.5" />
          <path
            d="M6 2v28M10 2v28M14 2v28M18 2v28M22 2v28M26 2v28M2 6h28M2 10h28M2 14h28M2 18h28M2 22h28M2 26h28"
            stroke="#555c68"
            strokeWidth="0.8"
          />
        </>
      );
    default:
      return (
        <>
          <path d="M2 4h28v25H2z" fill="#8fb2dd" stroke="#2c4a80" strokeWidth="1.5" />
          <path d="M16 4v25M2 16.5h28" stroke="#1f3a6c" strokeWidth="2" />
          <path d="M4.500 6.500h9v7.500h-9zM18.500 6.500h9v7.500h-9zM4.500 19h9v7.500h-9zM18.500 19h9v7.500h-9z" stroke="#4a6da8" />
        </>
      );
  }
}

const navItems = [
  { name: "Orbit", menu: true, space: "gap-2 mr-[11px]" },
  { name: "Look at", menu: false, space: "mr-[18px]" },
  { name: "Pan", menu: false, space: "mr-[18px]" },
  { name: "Zoom", menu: false, space: "mr-[18px]" },
  { name: "Fit", menu: true, space: "gap-2 mr-[11px]" },
  { name: "Display", menu: true, space: "gap-1 mr-3" },
  { name: "Grid", menu: true, space: "gap-1 mr-3" },
  { name: "Viewports", menu: true, space: "gap-1" },
];

function NavBar() {
  return (
    <div className="mb-[3px] flex h-11 items-center self-end bg-[#f1f1f1] px-[7px]">
      {navItems.map(({ name, menu, space }) => (
        <button key={name} aria-label={name} className={`flex items-center ${space}`}>
          <Icon className="h-[29px] w-[29px]" box="0 0 32 32">
            <NavIcon name={name} />
          </Icon>
          {menu && <Caret />}
        </button>
      ))}
    </div>
  );
}

/* ---------- timeline ---------- */

// s sketch, e extrude, m move, c combine, r remove, l scale, h hole
const timeline = [
  "sssesseeeseeeessess",
  "sssssssssssss",
  "eesseeeeeeessssesee",
  "emmmceeeeeeeeesses",
  "emrmrllh",
].join("");

const highlights: Record<number, string> = {
  16: "bg-[#e6e923]",
  65: "bg-[#0696d7]",
  70: "bg-[#ff4343]",
  72: "bg-[#ff4343]",
  73: "bg-[#ff4343]",
};

function FeatureIcon({ kind }: { kind: string }) {
  switch (kind) {
    case "s":
      return (
        <>
          <path d="M6 3.5h46M6 59h26" stroke="#999" strokeWidth="3" />
          <path d="M3 6v50M55 6v30M20 18h20M17 22v18M42 22c-1 10-9 20-22 22" stroke="#777" strokeWidth="2" />
          <path
            d="M0 0h6v6H0zM52 0h6v6h-6zM0 56h6v6H0zM14 14h6v6h-6zM38 14h6v6h-6zM14 40h6v6h-6z"
            fill="#1a8fe6"
          />
          <path d="M50 38l9 8-17 17-9-8z" fill="#ffbf4a" stroke="#e0a030" />
          <path d="M50 37c4-6 14-3 13 3l-4 6z" fill="#f0303c" />
          <path d="M32 55l9 8-11 4z" fill={EDGE} />
        </>
      );
    case "e":
      return <ExtrudeShape />;
    case "m":
      return <MoveShape />;
    case "c":
      return <CombineShape />;
    case "r":
      return (
        <>
          <path d="M4 5l10 18M14 5L4 23" stroke="#8e1410" strokeWidth="6" />
          <path d="M4 6l10 16M14 6L4 22" stroke="#ff6a60" strokeWidth="3" />
          <path d="M18 30l8-7h24l-8 7z" fill="#fff" />
          <path d="M42 30l8-7v28l-8 9z" fill="#d5dbe0" />
          <path d="M18 30h24v30H18z" fill="#a9d8f0" />
          <path d="M18 30l8-7h24v28l-8 9H18zM18 30h24v30" stroke="#23638f" strokeWidth="2.5" />
        </>
      );
    case "l":
      return (
        <>
          <path d="M1 1h60v60H1z" fill={BLUE} stroke="#5ba0d6" />
          <rect x="1" y="27" width="36" height="36" fill="#f1f1f1" />
          <rect x="2" y="30" width="31" height="32" fill="#f5f5f5" stroke={EDGE} strokeWidth="2.5" />
        </>
      );
    default:
      return <HoleShape />;
  }
}

const playback = [
  { name: "Go to start", size: "w-[21px]", gap: "mr-[23px]", box: "0 0 21 22", d: "M0 0h3v22H0zM20 1v20L4 11z" },
  { name: "Step back", size: "w-[23px]", gap: "mr-[25px]", box: "0 0 23 22", d: "M18 0v22L0 11zM20 7h3v9h-3z" },
  { name: "Play", size: "w-[21px]", gap: "mr-[22px]", box: "0 0 21 28", d: "M0 0l21 14L0 28z" },
  { name: "Step forward", size: "w-6", gap: "mr-6", box: "0 0 24 22", d: "M6 0v22l18-11zM0 7h3v9H0z" },
  { name: "Go to end", size: "w-5", gap: "mr-9", box: "0 0 20 22", d: "M17 0h3v22h-3zM0 1v20l16-10z" },
];

function Timeline() {
  return (
    <footer className="border-t-4 border-[#ccc] bg-[#f1f1f1]">
      <div className="flex h-[2px] bg-[#ccc]">
        <div className="mr-[82px] ml-[247px] flex-1 bg-[#ddd]" />
      </div>
      <div className="flex h-[85px] items-center pl-5">
        {playback.map(({ name, size, gap, box, d }) => (
          <button key={name} aria-label={name} className={gap}>
            <Icon className={name === "Play" ? `h-7 ${size}` : `h-[22px] ${size}`} box={box}>
              <path d={d} fill="#666" />
            </Icon>
          </button>
        ))}
        <div className="w-[3379px] pt-2">
          <ol className="flex">
            {timeline.split("").map((kind, i) => (
              <li key={i} className="flex flex-1 flex-col items-center">
                <button
                  aria-label={`Feature ${i + 1}`}
                  className={`z-10 flex h-11 w-full items-center justify-center rounded-[4px] ${highlights[i] ?? ""}`}
                >
                  <Icon className="h-[29px] w-[29px]">
                    <FeatureIcon kind={kind} />
                  </Icon>
                </button>
                <span className="-mt-[2px] h-[9px] w-1 bg-[#ccc]" />
              </li>
            ))}
          </ol>
          <div className="mx-5 h-1 bg-[#ccc]" />
        </div>
        <Icon className="-ml-3 h-[60px] w-[22px]" box="0 0 22 60">
          <path d="M0 0h22v11l-9 6v43h-4V17l-9-6z" fill="#666" />
        </Icon>
        <button aria-label="Timeline settings" className="mr-[26px] ml-auto">
          <GearIcon className="h-7 w-7" />
        </button>
      </div>
    </footer>
  );
}

export default function App() {
  return (
    <div className="flex min-h-screen flex-col bg-white font-['Open_Sans','Noto_Sans',sans-serif]">
      <TitleBar />
      <Ribbon />
      <div className="h-[6px] bg-[#f1f1f1]" />
      <main className="relative flex flex-1 flex-col justify-between">
        <Model />
        <div className="relative flex items-start justify-between">
          <Browser />
          <ViewCube />
        </div>
        <div className="relative grid grid-cols-[1fr_auto_1fr] pb-2">
          <div className="ml-[7px] flex h-[45px] w-[548px] items-center self-end border-x border-b-2 border-[#ccc] bg-[#f1f1f1] pr-5 pl-[45px]">
            <h2 className="flex-1 text-[20px] text-[#666]">COMMENTS</h2>
            <button aria-label="Expand comments">
              <PanelDot plus />
            </button>
          </div>
          <NavBar />
          <button
            aria-label="Assistant"
            className="mr-[23px] mb-px flex h-[30px] w-[30px] items-center justify-center self-end justify-self-end rounded-full rounded-br-none bg-black"
          >
            <Icon className="h-[18px] w-[18px]" box="0 0 18 18">
              <path d="M1 10l7-7M2 15L14 3M8 15l8-8M13 15l3-3" stroke="#fff" strokeWidth="2" />
            </Icon>
          </button>
        </div>
      </main>
      <Timeline />
    </div>
  );
}
